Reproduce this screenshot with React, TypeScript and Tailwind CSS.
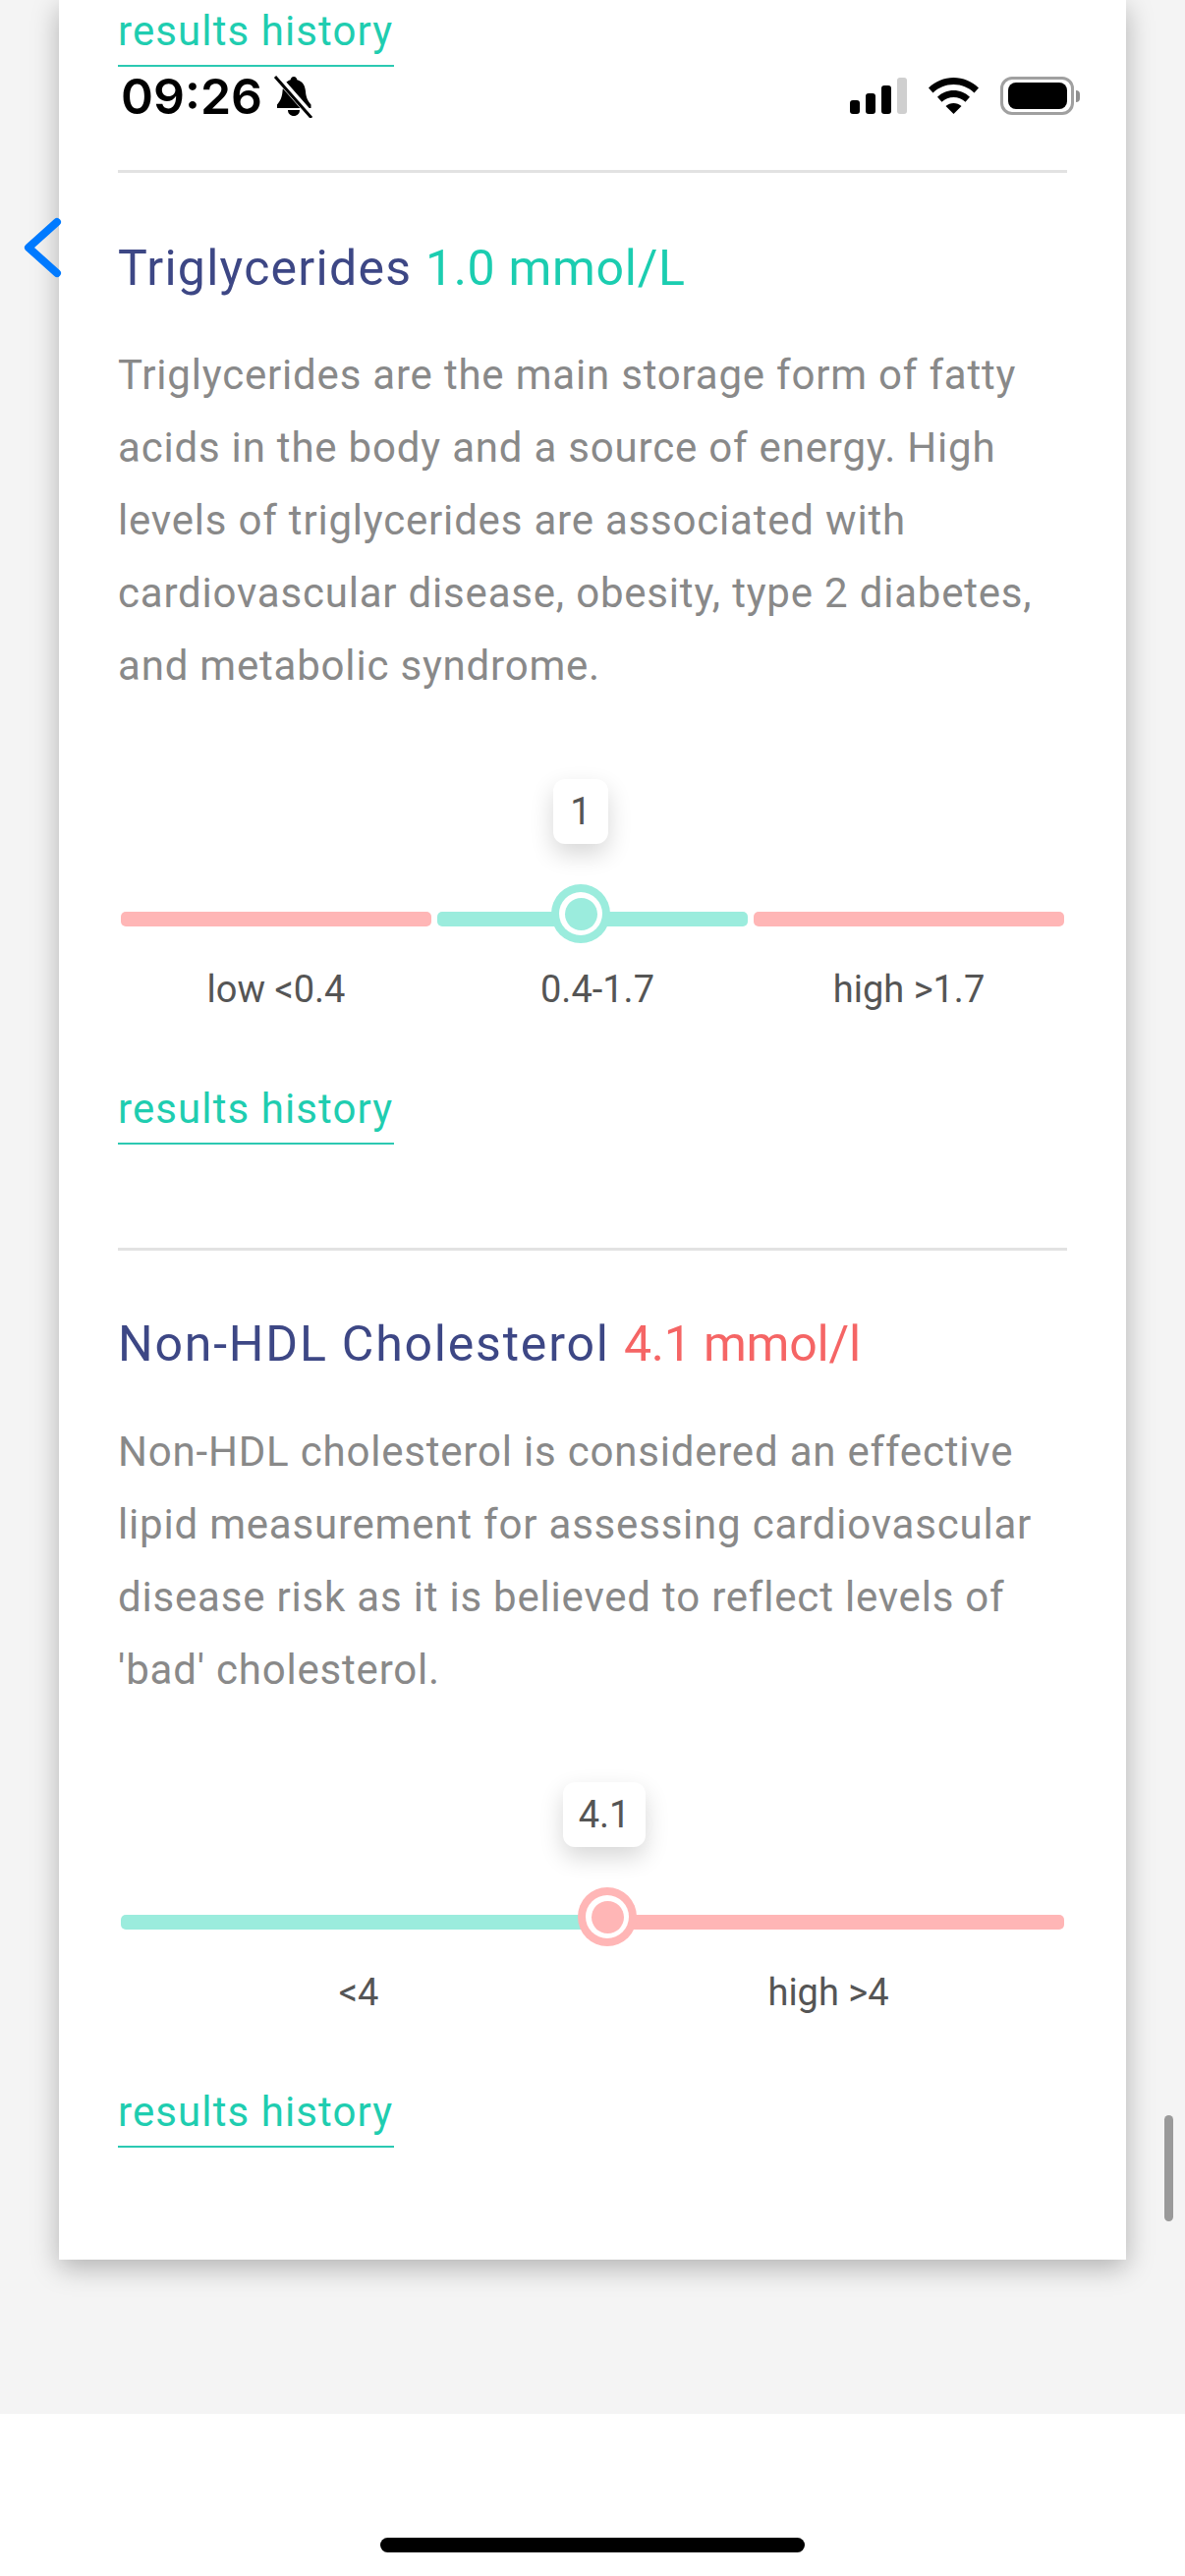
const bodyFont = "font-['Roboto','Liberation_Sans',sans-serif]";

function ResultsLink() {
  return (
    <a className="block w-[281px] border-b-2 border-[#2cc9b2] pb-[6px] text-[42px] leading-[56px] tracking-[1.1px] text-[#1fcdb0]">
      results history
    </a>
  );
}

function Thumb({ ring, left }: { ring: string; left: string }) {
  return (
    <span
      className={`absolute top-[-28px] flex h-[60px] w-[60px] -translate-x-1/2 items-center justify-center rounded-full ${ring} ${left}`}
    >
      <span className="flex h-[44px] w-[44px] items-center justify-center rounded-full bg-white">
        <span className={`h-[33px] w-[33px] rounded-full ${ring}`} />
      </span>
    </span>
  );
}

function Tip({ value, className }: { value: string; className: string }) {
  return (
    <span
      className={`absolute flex h-[66px] -translate-x-1/2 items-center justify-center rounded-[12px] bg-white text-[38px] text-[#555] shadow-[0_10px_24px_rgba(0,0,0,0.16)] ${className}`}
    >
      {value}
    </span>
  );
}

function Divider() {
  return <div className="h-[3px] bg-[#e2e2e2]" />;
}

function Chevron() {
  return (
    <svg className="absolute left-[20px] top-[216px]" width="46" height="72" viewBox="0 0 46 72">
      <path d="M38 10 L9 36 L38 62" fill="none" stroke="#007aff" strokeWidth="8" strokeLinecap="round" strokeLinejoin="round" />
    </svg>
  );
}

function StatusBar() {
  return (
    <div className="absolute left-0 top-0 h-[130px] w-full">
      <span className="absolute left-[123px] top-[68px] font-['Inter',sans-serif] text-[50px] leading-[60px] font-semibold text-black">
        09:26
      </span>
      <svg className="absolute left-[278px] top-[76px]" width="42" height="44" viewBox="0 0 42 44">
        <path d="M21 2c2 0 3 1.500 3.400 3.200C30 6.800 32.500 11 33 17c.4 6 2 9.500 5.500 13.500V34H4v-3.500C7.500 26.500 9 23 9.500 17 10 11 12.500 6.800 17.600 5.200 18 3.500 19 2 21 2z" fill="#000" />
        <path d="M15 36h12c0 3.500-2.500 6-6 6s-6-2.500-6-6z" fill="#000" />
        <path d="M3 1 L40 43" stroke="#fff" strokeWidth="7" />
        <path d="M2 2 L39 44" stroke="#000" strokeWidth="3" />
      </svg>
      <div className="absolute left-[865px] top-[79px] flex h-[37px] items-end gap-[6px]">
        <span className="h-[14px] w-[10px] rounded-[3px] bg-black" />
        <span className="h-[21px] w-[10px] rounded-[3px] bg-black" />
        <span className="h-[29px] w-[10px] rounded-[3px] bg-black" />
        <span className="h-[37px] w-[10px] rounded-[3px] bg-[#cfcfcf]" />
      </div>
      <svg className="absolute left-[945px] top-[79px]" width="51" height="37" viewBox="0 0 51 37">
        <path d="M25.500 0C35 0 44 3.800 51 10.500l-4.500 5C40.800 10 33.500 7 25.500 7S10.200 10 4.500 15.500L0 10.500C7 3.800 16 0 25.500 0z" fill="#000" />
        <path d="M25.500 13c6.200 0 12 2.400 16.500 6.700l-4.500 5C34.300 21.700 30 20 25.500 20s-8.800 1.700-12 4.700l-4.500-5C13.500 15.400 19.300 13 25.500 13z" fill="#000" />
        <path d="M25.500 26c3 0 5.700 1 8 3L25.500 37l-8-8c2.300-2 5-3 8-3z" fill="#000" />
      </svg>
      <div className="absolute left-[1018px] top-[78px] flex items-center gap-[2px]">
        <span className="flex h-[39px] w-[75px] items-center justify-center rounded-[12px] border-[3px] border-[#a0a0a0]">
          <span className="h-[27px] w-[60px] rounded-[8px] bg-black" />
        </span>
        <span className="h-[12px] w-[4px] rounded-r-[4px] bg-[#8f8f8f]" />
      </div>
    </div>
  );
}

export default function App() {
  return (
    <div className={`relative flex h-[2622px] w-[1206px] flex-col overflow-hidden bg-white ${bodyFont}`}>
      <main className="h-[2457px] shrink-0 bg-[#f4f4f4]">
        <article className="ml-[60px] h-[2300px] w-[1086px] bg-white px-[60px] pt-[4px] shadow-[0_8px_26px_rgba(0,0,0,0.28)]">
          <ResultsLink />
          <div className="mt-[105px]">
            <Divider />
          </div>

          <h2 className="mt-[67px] text-[50px] leading-[60px] text-[#3d4785]">
            <span className="tracking-[1.25px]">Triglycerides </span>
            <span className="tracking-[0.7px] text-[#1bcdb0]">1.0 mmol/L</span>
          </h2>
          <p className="mt-[42px] text-[42px] leading-[74px] tracking-[0.8px] text-[#898989]">
            Triglycerides are the main storage form of fatty
            <br />
            acids in the body and a source of energy. High
            <br />
            levels of triglycerides are associated with
            <br />
            cardiovascular disease, obesity, type 2 diabetes,
            <br />
            and metabolic syndrome.
          </p>

          <div className="relative mt-[213px] flex gap-[6px] pl-[3px] pr-[3px]">
            <Tip value="1" className="left-[471px] top-[-135px] w-[56px]" />
            <span className="h-[15px] flex-1 rounded-[5px] bg-[#ffb6b6]" />
            <span className="h-[15px] flex-1 rounded-[5px] bg-[#9becdd]" />
            <span className="h-[15px] flex-1 rounded-[5px] bg-[#ffb6b6]" />
            <Thumb ring="bg-[#9becdd]" left="left-[471px]" />
          </div>
          <div className="mt-[39px] grid grid-cols-3 text-center text-[38px] leading-[50px] text-[#555]">
            <span>low &lt;0.4</span>
            <span className="pl-[10px]">0.4-1.7</span>
            <span>high &gt;1.7</span>
          </div>

          <div className="mt-[69px]">
            <ResultsLink />
          </div>
          <div className="mt-[105px]">
            <Divider />
          </div>

          <h2 className="mt-[65px] text-[50px] leading-[60px] text-[#3d4785]">
            <span className="tracking-[1.8px]">Non-HDL Cholesterol </span>
            <span className="tracking-[-0.2px] text-[#f56565]">4.1 mmol/l</span>
          </h2>
          <p className="mt-[43px] text-[42px] leading-[74px] tracking-[0.8px] text-[#898989]">
            Non-HDL cholesterol is considered an effective
            <br />
            lipid measurement for assessing cardiovascular
            <br />
            disease risk as it is believed to reflect levels of
            <br />
            'bad' cholesterol.
          </p>

          <div className="relative mt-[212px] flex pl-[3px] pr-[3px]">
            <Tip value="4.1" className="left-[495px] top-[-135px] w-[84px]" />
            <span className="h-[15px] w-[495px] rounded-l-[5px] bg-[#9becdd]" />
            <span className="h-[15px] flex-1 rounded-r-[5px] bg-[#ffb6b6]" />
            <Thumb ring="bg-[#ffb6b6]" left="left-[498px]" />
          </div>
          <div className="mt-[39px] flex text-center text-[38px] leading-[50px] text-[#555]">
            <span className="w-[490px]">&lt;4</span>
            <span className="w-[466px]">high &gt;4</span>
          </div>

          <div className="mt-[69px]">
            <ResultsLink />
          </div>
        </article>
      </main>

      <footer className="flex flex-1 justify-center bg-white pt-[126px]">
        <span className="h-[15px] w-[432px] rounded-full bg-black" />
      </footer>

      <StatusBar />
      <Chevron />
      <span className="absolute left-[1185px] top-[2153px] h-[108px] w-[9px] rounded-full bg-[#9a9a9a]" />
    </div>
  );
}
